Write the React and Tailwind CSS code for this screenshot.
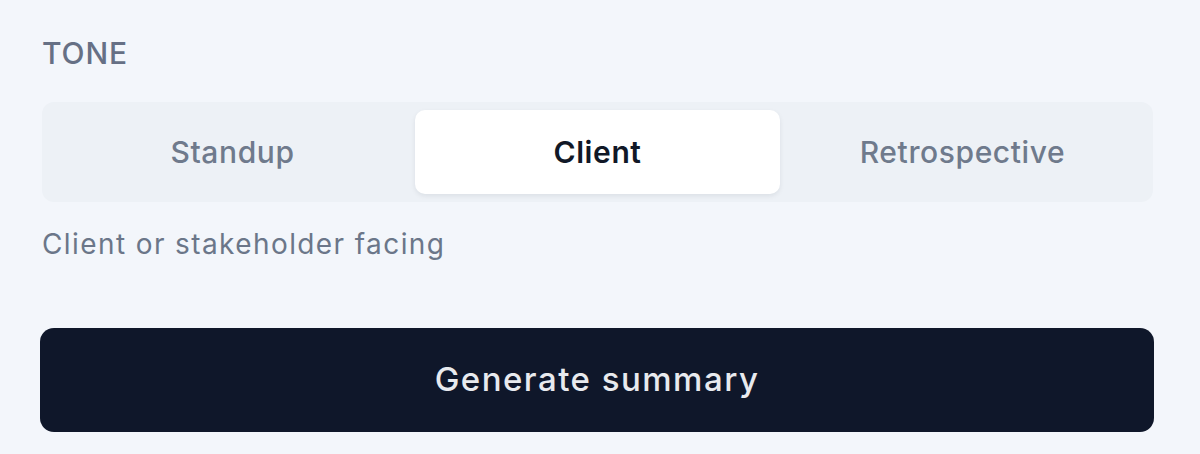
export default function App() {
  const tabs = ['Standup', 'Client', 'Retrospective']
  const active = 'Client'

  return (
    <div className="min-h-screen w-full bg-[#f3f6fb] pl-[40px] pr-[46px] pt-[38px] font-['Inter',sans-serif]">
      {/* Tone label */}
      <div className="ml-[2px] text-[30px] leading-[30px] tracking-[0.03em] font-medium text-[#667085]">
        TONE
      </div>

      {/* Segmented control */}
      <div className="mt-[34px] ml-[2px] mr-[1px] flex rounded-[12px] bg-[#edf1f6] p-[8px]">
        {tabs.map((t) => (
          <div
            key={t}
            className={`flex h-[84px] flex-1 items-center justify-center rounded-[10px] text-[30px] tracking-[0.02em] ${
              t === active
                ? 'bg-white font-semibold text-[#111827] shadow-[0_2px_5px_rgba(15,23,42,0.08)]'
                : 'font-medium text-[#6f7a8c]'
            }`}
          >
            {t}
          </div>
        ))}
      </div>

      <div className="mt-[28px] ml-[2px] text-[28px] leading-[28px] tracking-[0.05em] text-[#6b7689]">
        Client or stakeholder facing
      </div>

      <button className="mt-[70px] flex h-[104px] w-full items-center justify-center rounded-[14px] bg-[#0f172a] text-[33px] font-medium tracking-[0.045em] text-[#e8eaee]">
        Generate summary
      </button>
    </div>
  )
}
